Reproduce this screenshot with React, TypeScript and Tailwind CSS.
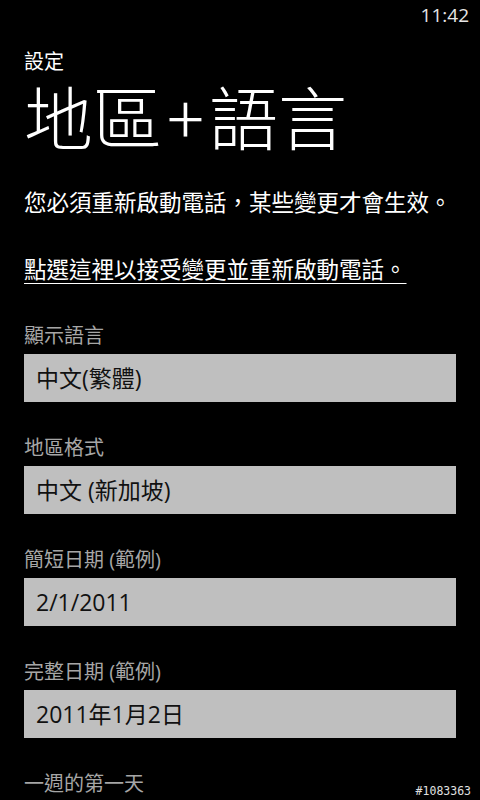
const cjk = { fontFamily: '"Open Sans", "Noto Sans CJK TC", sans-serif' };
const cjkOnly = { fontFamily: '"Noto Sans CJK TC", sans-serif' };

const fields = [
  { label: '顯示語言', value: '中文(繁體)' },
  { label: '地區格式', value: '中文 (新加坡)' },
  { label: '簡短日期 (範例)', value: '2/1/2011' },
  { label: '完整日期 (範例)', value: '2011年1月2日' },
];

export default function App() {
  return (
    <div className="relative w-[480px] h-[800px] overflow-hidden bg-black text-white" style={cjk}>
      {/* status bar */}
      <div className="flex justify-end h-[32px] pr-[11px] pt-[3px] text-[19px] leading-[24px] text-[#e6e6e6]">
        11:42
      </div>

      <div className="pl-[24px] pr-[24px]">
        <div className="mt-[17px] text-[20px] leading-[26px]">設定</div>
        <h1 className="mt-[5px] text-[69px] leading-[70px] font-light whitespace-nowrap" style={cjkOnly}>
          地區<span className="mx-[5px]">+</span>語言
        </h1>

        <p className="mt-[38px] text-[22.5px] leading-[30px] whitespace-nowrap">
          您必須重新啟動電話，某些變更才會生效。
        </p>

        <a className="mt-[37px] block w-[386px] text-[22.5px] leading-[30px] whitespace-nowrap underline decoration-1 underline-offset-[5px]">
          點選這裡以接受變更並重新啟動電話。
        </a>

        <div className="mt-[37px] flex flex-col">
          {fields.map((f) => (
            <div key={f.label} className="flex flex-col mb-[32px]">
              <div className="text-[20px] leading-[28px] h-[32px] text-[#a6a6a6]">{f.label}</div>
              <div className="h-[48px] w-[432px] bg-[#bfbfbf] text-[#111] text-[23px] leading-[48px] pl-[12px]">
                {f.value}
              </div>
            </div>
          ))}
          <div className="text-[20px] leading-[28px] text-[#a6a6a6]">一週的第一天</div>
        </div>
      </div>

      <div className="absolute right-[9px] bottom-[2px] text-[11.5px] leading-[14px] text-[#e0e0e0]" style={{ fontFamily: '"DejaVu Sans Mono", monospace' }}>
        #1083363
      </div>
    </div>
  );
}
